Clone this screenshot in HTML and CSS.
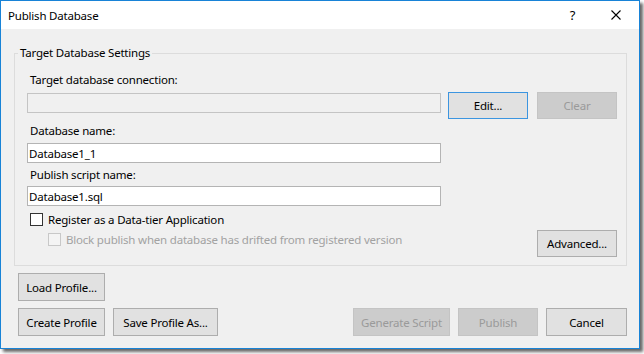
FILE: index.html
```html
<!DOCTYPE html>
<html lang="en">
<head>
    <meta charset="UTF-8">
    <title>Publish Database</title>
    <link rel="stylesheet" href="styles.css">
</head>
<body>
    <div class="window">
        <div class="titlebar">
            <span class="title">Publish Database</span>
            <div class="caption">
                <span class="cap help">?</span>
                <span class="cap">
                    <svg width="10" height="10" viewBox="0 0 10 10"><path d="M0.5 0.5 L9.5 9.5 M9.5 0.5 L0.5 9.5" stroke="#000" stroke-width="1.1" fill="none"/></svg>
                </span>
            </div>
        </div>
        <div class="content">
            <div class="group">
                <span class="legend">Target Database Settings</span>
                <div class="field-label">Target database connection:</div>
                <div class="conn-row">
                    <input class="textbox" type="text" disabled>
                    <button class="btn focused">Edit...</button>
                    <button class="btn" disabled>Clear</button>
                </div>
                <div class="field-label">Database name:</div>
                <input class="textbox gap2" type="text" value="Database1_1">
                <div class="field-label">Publish script name:</div>
                <input class="textbox gap1" type="text" value="Database1.sql">
                <div class="check first">
                    <span class="box"></span>
                    <span>Register as a Data-tier Application</span>
                </div>
                <div class="adv-row">
                    <div class="check sub disabled">
                        <span class="box"></span>
                        <span>Block publish when database has drifted from registered version</span>
                    </div>
                    <button class="btn">Advanced...</button>
                </div>
            </div>
            <div class="footer">
                <button class="btn load">Load Profile...</button>
                <div class="footer-row">
                    <div class="left">
                        <button class="btn w87">Create Profile</button>
                        <button class="btn w105">Save Profile As...</button>
                    </div>
                    <div class="right">
                        <button class="btn w97" disabled>Generate Script</button>
                        <button class="btn" disabled>Publish</button>
                        <button class="btn w81">Cancel</button>
                    </div>
                </div>
            </div>
        </div>
    </div>
</body>
</html>
```

FILE: styles.css
```css
* {
    box-sizing: border-box;
    margin: 0;
    padding: 0;
}
html, body {
    background: #fff;
}
body {
    width: 644px;
    height: 354px;
    overflow: hidden;
    font-family: "Noto Sans", "Open Sans", sans-serif;
    font-size: 11.5px;
    letter-spacing: -0.2px;
    color: #000;
}

.window {
    width: 640px;
    height: 349px;
    border: 1px solid #1883d7;
    background: #f0f0f0;
    box-shadow: 3px 3px 3px rgba(0, 0, 0, 0.6);
    display: flex;
    flex-direction: column;
}

/* title bar */
.titlebar {
    height: 28px;
    background: #fff;
    display: flex;
    align-items: center;
    justify-content: space-between;
}
.title {
    padding-left: 7px;
}
.caption {
    display: flex;
}
.cap {
    width: 46px;
    height: 28px;
    display: flex;
    align-items: center;
    justify-content: center;
    font-size: 13px;
}
.cap.help {
    padding-left: 5px;
}

.content {
    padding: 24px 0 12px 0;
}

/* group box */
.group {
    position: relative;
    margin: 0 12px 0 13px;
    border: 1px solid #dcdcdc;
    padding: 16px 9px 8px 12px;
}
.legend {
    position: absolute;
    left: 3px;
    top: -9px;
    height: 16px;
    line-height: 16px;
    padding: 0 2px;
    background: #f0f0f0;
}
.field-label {
    height: 20px;
    line-height: 20px;
    padding-left: 3px;
    margin-top: 2px;
}
.group .field-label:first-of-type {
    margin-top: 0;
}

.textbox {
    display: block;
    width: 414px;
    height: 20px;
    border: 1px solid #b4b4b4;
    background: #fff;
    font: inherit;
    letter-spacing: inherit;
    color: #000;
    padding: 0 1px;
    outline: none;
}
.textbox:disabled {
    background: #f0f0f0;
    border-color: #c4c4c4;
}
.gap2 { margin-top: 2px; }
.gap1 { margin-top: 1px; }

.conn-row {
    display: flex;
    align-items: flex-start;
    margin-top: 2px;
}
.conn-row .textbox {
    margin-top: 1px;
}
.conn-row .btn {
    height: 27px;
    margin-left: 7px;
}
.conn-row .btn + .btn {
    margin-left: 9px;
}

/* buttons */
.btn {
    width: 80px;
    height: 28px;
    background: #e1e1e1;
    border: 1px solid #adadad;
    font: inherit;
    letter-spacing: inherit;
    color: #000;
    text-align: center;
}
.btn:disabled {
    background: #cccccc;
    border-color: #c4c4c4;
    color: #9a9a9a;
}
.btn.focused {
    border-color: #3c95e0;
}
.w81 { width: 81px; }
.w87 { width: 87px; }
.w97 { width: 97px; }
.w105 { width: 105px; }

/* checkboxes */
.check {
    display: flex;
    align-items: center;
    height: 19px;
    padding-left: 3px;
}
.check.first {
    margin-top: 4px;
}
.check .box {
    width: 13px;
    height: 13px;
    border: 1px solid #333;
    background: #fff;
    margin-right: 5px;
}
.check.sub {
    padding-left: 21px;
}
.check.disabled {
    color: #a2a2a2;
}
.check.disabled .box {
    border-color: #c8c8c8;
    background: #f4f4f4;
}
.adv-row {
    display: flex;
    justify-content: space-between;
    align-items: flex-start;
    margin-top: 1px;
}
.adv-row .btn {
    height: 27px;
}

/* bottom buttons */
.footer {
    padding: 0 12px 0 17px;
}
.load {
    width: 87px;
    margin-top: 7px;
}
.footer-row {
    display: flex;
    justify-content: space-between;
    margin-top: 7px;
}
.left, .right {
    display: flex;
    gap: 8px;
}
```
